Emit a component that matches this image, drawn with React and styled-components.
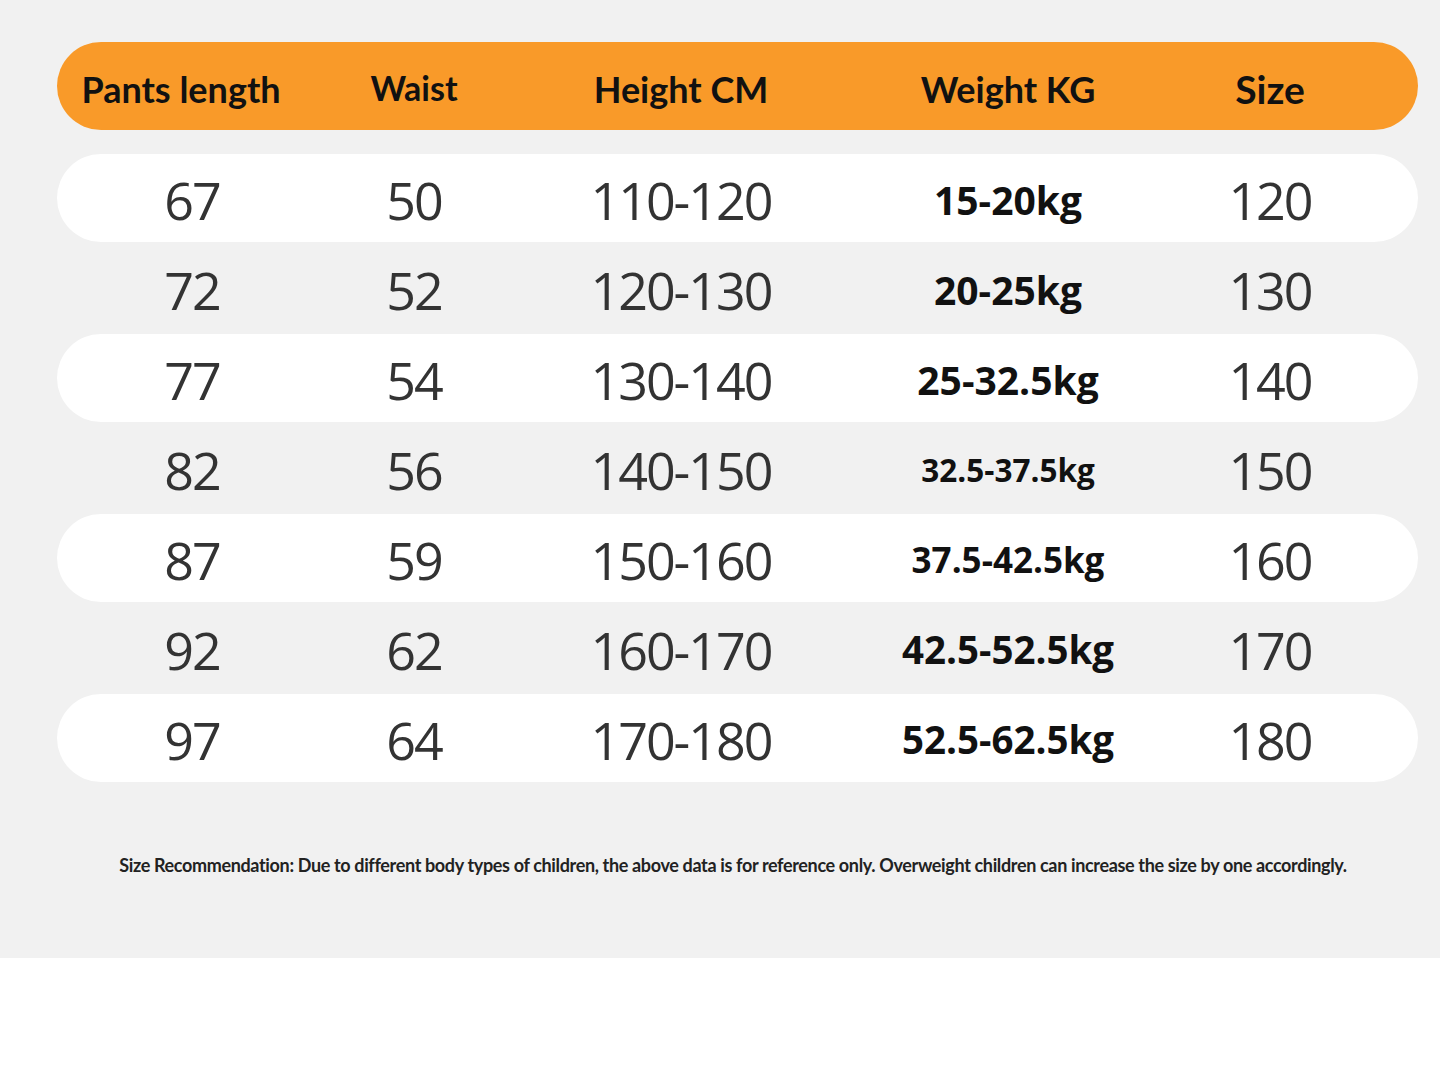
import React from 'react';
import styled, { createGlobalStyle } from 'styled-components';

const GlobalStyle = createGlobalStyle`
  html, body {
    margin: 0;
    padding: 0;
    background: #ffffff;
  }
`;

const Panel = styled.div`
  width: 1440px;
  height: 958px;
  box-sizing: border-box;
  background: #f1f1f1;
  padding: 42px 22px 0 57px;
`;

const Table = styled.div`
  width: 1361px;
  display: flex;
  flex-direction: column;
`;

const COLS = '270px 174px 360px 294px 230px';

const HeaderBar = styled.div`
  display: grid;
  grid-template-columns: ${COLS};
  align-items: center;
  height: 88px;
  padding-right: 33px;
  margin-bottom: 24px;
  border-radius: 44px;
  background: #f99a29;
`;

const HeadCell = styled.div`
  text-align: center;
  font-family: Lato, 'Open Sans', sans-serif;
  font-weight: 700;
  font-size: ${(p) => p.$size || 36}px;
  color: #111;
  padding-right: ${(p) => p.$shift || 0}px;
  padding-top: ${(p) => p.$drop || 0}px;
`;

const Row = styled.div`
  display: grid;
  grid-template-columns: ${COLS};
  align-items: center;
  height: 88px;
  padding-right: 33px;
  margin-bottom: 2px;
  border-radius: 44px;
  background: ${(p) => (p.$striped ? '#ffffff' : 'transparent')};
`;

const NumCell = styled.div`
  text-align: center;
  font-family: 'Open Sans', 'Noto Sans', sans-serif;
  font-weight: 400;
  font-size: 52px;
  letter-spacing: -2px;
  color: #333;
  padding-top: 2px;
`;

const WeightCell = styled.div`
  text-align: center;
  font-family: 'Open Sans', 'Noto Sans', sans-serif;
  font-weight: 700;
  font-size: ${(p) => p.$size}px;
  color: #111;
  padding-top: 2px;
`;

const Note = styled.p`
  margin: 70px 0 0;
  width: 1361px;
  box-sizing: border-box;
  padding-right: 9px;
  text-align: center;
  font-family: Lato, 'Open Sans', sans-serif;
  font-weight: 700;
  font-size: 18px;
  letter-spacing: -0.35px;
  color: #222;
`;

const rows = [
  ['67', '50', '110-120', '15-20kg', 39, '120'],
  ['72', '52', '120-130', '20-25kg', 39, '130'],
  ['77', '54', '130-140', '25-32.5kg', 39, '140'],
  ['82', '56', '140-150', '32.5-37.5kg', 31.5, '150'],
  ['87', '59', '150-160', '37.5-42.5kg', 35, '160'],
  ['92', '62', '160-170', '42.5-52.5kg', 38.5, '170'],
  ['97', '64', '170-180', '52.5-62.5kg', 38.5, '180'],
];

export default function App() {
  return (
    <>
      <GlobalStyle />
      <Panel>
        <Table>
          <HeaderBar>
            <HeadCell $shift={22} $drop={5}>Pants length</HeadCell>
            <HeadCell $size={34} $drop={2}>Waist</HeadCell>
            <HeadCell $drop={5}>Height CM</HeadCell>
            <HeadCell $drop={5}>Weight KG</HeadCell>
            <HeadCell $size={39} $drop={5}>Size</HeadCell>
          </HeaderBar>
          {rows.map((r, i) => (
            <Row key={r[0]} $striped={i % 2 === 0}>
              <NumCell>{r[0]}</NumCell>
              <NumCell>{r[1]}</NumCell>
              <NumCell>{r[2]}</NumCell>
              <WeightCell $size={r[4]}>{r[3]}</WeightCell>
              <NumCell>{r[5]}</NumCell>
            </Row>
          ))}
        </Table>
        <Note>
          Size Recommendation: Due to different body types of children, the above data is for reference only. Overweight children can increase the size by one accordingly.
        </Note>
      </Panel>
    </>
  );
}
